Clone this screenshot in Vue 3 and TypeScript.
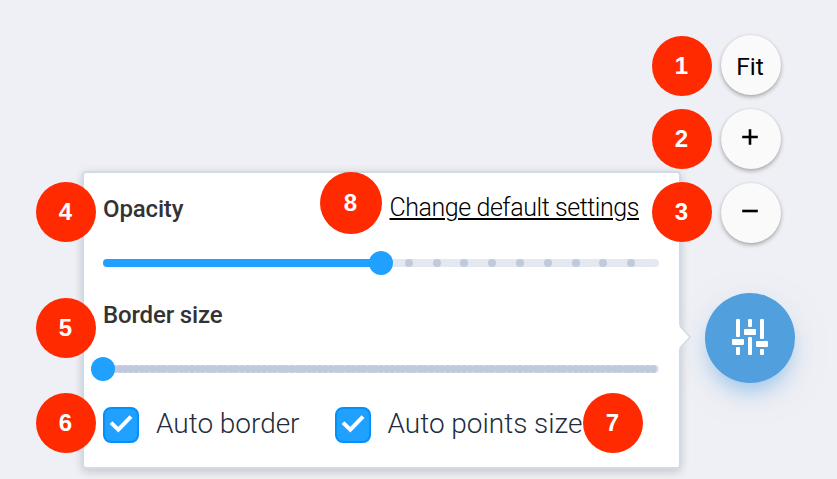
<script setup lang="ts">
interface Marker {
  n: number
  x: number
  y: number
  size: number
}

interface Slider {
  value: number
  step: number
}

const markers: Marker[] = [
  { n: 1, x: 652, y: 36, size: 60 },
  { n: 2, x: 652, y: 109, size: 60 },
  { n: 3, x: 652, y: 182, size: 60 },
  { n: 4, x: 36, y: 182, size: 60 },
  { n: 5, x: 36, y: 298, size: 60 },
  { n: 6, x: 36, y: 393, size: 60 },
  { n: 7, x: 583, y: 393, size: 60 },
  { n: 8, x: 320, y: 172, size: 62 },
]

const opacity: Slider = { value: 50, step: 5 }
const border: Slider = { value: 0, step: 1 }

function stops(s: Slider): number[] {
  const out: number[] = []
  for (let v = s.value + s.step; v < 100; v += s.step) out.push(v)
  return out
}

const checks: string[] = ['Auto border', 'Auto points size']
</script>

<template>
  <main class="stage">
    <aside class="controls">
      <button class="round fit">Fit</button>
      <button class="round">
        <svg width="18" height="18" viewBox="0 0 18 18"><path d="M1.2 9H16.8M9 1.2V16.8" /></svg>
      </button>
      <button class="round">
        <svg width="18" height="18" viewBox="0 0 18 18"><path d="M1.2 9H16.8" /></svg>
      </button>
      <button class="settings">
        <svg width="36" height="36" viewBox="0 0 36 36" fill="#fff">
          <rect x="4" y="0" width="4" height="18" rx="1" />
          <rect x="0" y="20" width="12" height="6" rx="1" />
          <rect x="4" y="28" width="4" height="8" rx="1" />
          <rect x="16" y="0" width="4" height="8" rx="1" />
          <rect x="12" y="10" width="12" height="6" rx="1" />
          <rect x="16" y="18" width="4" height="18" rx="1" />
          <rect x="28" y="0" width="4" height="20" rx="1" />
          <rect x="24" y="22" width="12" height="6" rx="1" />
          <rect x="28" y="30" width="4" height="6" rx="1" />
        </svg>
      </button>
    </aside>

    <section class="popover">
      <div class="head">
        <span class="label">Opacity</span>
        <a class="link">Change default settings</a>
      </div>
      <div class="track first">
        <div class="fill" :style="{ width: opacity.value + '%' }"></div>
        <i v-for="s in stops(opacity)" :key="s" class="stop" :style="{ left: s + '%' }"></i>
        <b class="knob" :style="{ left: opacity.value + '%' }"></b>
      </div>
      <div class="head second"><span class="label">Border size</span></div>
      <div class="track last">
        <i v-for="s in stops(border)" :key="s" class="stop" :style="{ left: s + '%' }"></i>
        <b class="knob" :style="{ left: border.value + '%' }"></b>
      </div>
      <div class="checks">
        <label v-for="c in checks" :key="c" class="check">
          <span class="box">
            <svg width="32" height="32" viewBox="0 0 32 32">
              <path d="M6 13.6L13.3 20.6L26 7.6" fill="none" stroke="#fff" stroke-width="4" />
            </svg>
          </span>
          <span class="check-text">{{ c }}</span>
        </label>
      </div>
      <svg class="arrow" width="13" height="26" viewBox="0 0 13 26">
        <path d="M0 1.5H1L11.5 13L1 24.5H0Z" fill="#fff" />
        <path d="M1 2L11 13L1 24" fill="none" stroke="#d1dbe5" stroke-width="1.6" />
      </svg>
    </section>

    <span
      v-for="m in markers"
      :key="m.n"
      class="marker"
      :style="{ left: m.x + 'px', top: m.y + 'px', width: m.size + 'px', height: m.size + 'px' }"
    >{{ m.n }}</span>
  </main>
</template>

<style>
body {
  background: #eff0f5;
  overflow: hidden;
}
</style>

<style scoped>
.stage {
  position: relative;
  width: 837px;
  height: 479px;
  overflow: hidden;
  background: #eff0f5;
  font-family: Roboto, "Liberation Sans", sans-serif;
}
.controls {
  display: flex;
  flex-direction: column;
  align-items: center;
  gap: 14px;
  width: 90px;
  margin-left: 705px;
  padding-top: 35px;
}
.round {
  display: flex;
  align-items: center;
  justify-content: center;
  width: 60px;
  height: 60px;
  margin-left: 2px;
  padding: 0 2px 4px 0;
  box-sizing: border-box;
  border: 0;
  border-radius: 50%;
  background: #fafafa;
  color: #000;
  font: 400 24px Roboto, sans-serif;
  box-shadow: 0 2px 4px rgba(0, 0, 0, 0.3), 0 0 2px rgba(0, 0, 0, 0.08);
}
.round.fit {
  padding-bottom: 0;
  padding-top: 3px;
  font-size: 24.5px;
}
.round path {
  stroke: #000;
  stroke-width: 2.6;
}
.settings {
  display: flex;
  align-items: center;
  justify-content: center;
  width: 90px;
  height: 90px;
  margin-top: 36px;
  padding: 0 0 2px;
  border: 0;
  border-radius: 50%;
  background: #529fdd;
  box-shadow: 0 12px 20px -4px rgba(82, 165, 235, 0.5), 0 10px 50px rgba(120, 130, 150, 0.07);
}
.popover {
  position: absolute;
  left: 82px;
  top: 171px;
  width: 599px;
  height: 298px;
  box-sizing: border-box;
  padding: 18px 20px 0 19px;
  border: 2px solid #d1dbe8;
  border-radius: 4px;
  background: #fff;
  box-shadow: 0 4px 8px rgba(0, 0, 0, 0.12), 0 0 12px rgba(0, 0, 0, 0.06);
}
.arrow {
  position: absolute;
  left: 595px;
  top: 151px;
}
.head {
  display: flex;
  justify-content: space-between;
  height: 36px;
  line-height: 36px;
  font-size: 24px;
}
.label {
  color: #333;
  font-weight: 500;
  letter-spacing: -0.15px;
}
.link {
  margin-right: 20px;
  color: #000;
  font-size: 25px;
  font-weight: 300;
  letter-spacing: -0.44px;
  line-height: 33px;
  text-decoration: underline;
  text-decoration-thickness: 2px;
  text-underline-offset: 2px;
}
.track {
  position: relative;
  height: 8px;
  border-radius: 4px;
  background: #e4e8f1;
}
.first {
  margin-top: 32px;
}
.second {
  margin-top: 30px;
}
.last {
  margin-top: 32px;
}
.fill {
  height: 8px;
  border-radius: 4px 0 0 4px;
  background: #20a0ff;
}
.stop {
  position: absolute;
  top: 0;
  width: 8px;
  height: 8px;
  margin-left: -4px;
  border-radius: 50%;
  background: #bfcbdc;
}
.knob {
  position: absolute;
  top: -8px;
  width: 24px;
  height: 24px;
  margin-left: -12px;
  border-radius: 50%;
  background: #20a0ff;
}
.checks {
  display: flex;
  gap: 35px;
  margin-top: 34px;
}
.check {
  display: flex;
  align-items: center;
  gap: 17px;
  height: 36px;
}
.box {
  width: 32px;
  height: 32px;
  border: 2px solid #0190fe;
  border-radius: 8px;
  background: #20a0ff;
}
.box svg {
  display: block;
}
.check-text {
  margin-top: -3px;
  color: #1f2d3d;
  font-size: 28px;
  font-weight: 300;
  line-height: 36px;
  letter-spacing: -0.03px;
  white-space: nowrap;
}
.marker {
  position: absolute;
  display: flex;
  align-items: center;
  justify-content: center;
  box-sizing: border-box;
  padding-right: 1px;
  border-radius: 50%;
  background: #ff2a00;
  color: #fff;
  font: 700 24px "Liberation Sans", Arial, sans-serif;
}
</style>
